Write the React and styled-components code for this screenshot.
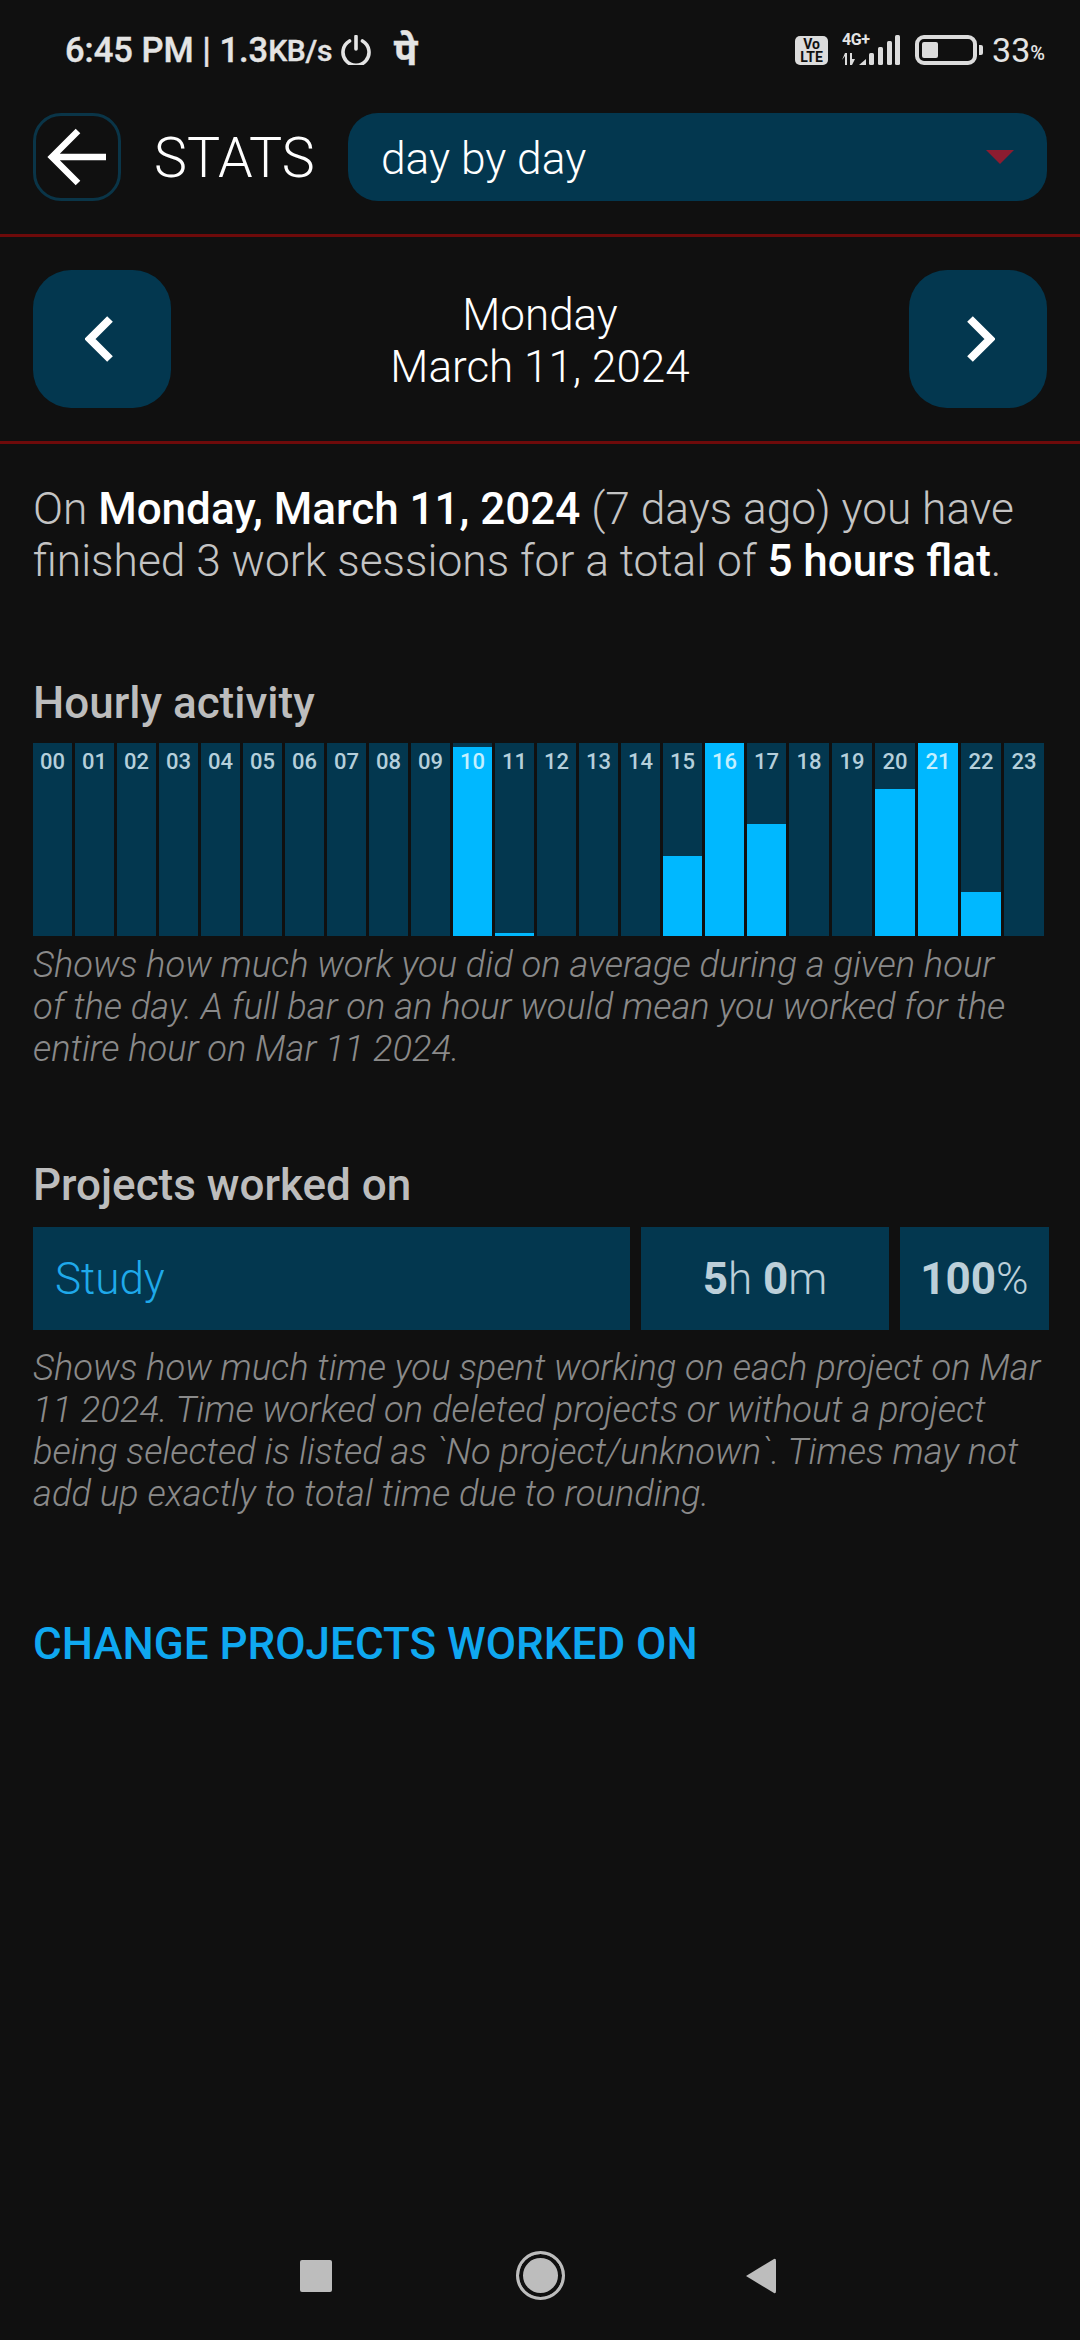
import styled, { createGlobalStyle } from "styled-components";

const GlobalStyle = createGlobalStyle`
  html, body {
    margin: 0;
    padding: 0;
    background: #101010;
  }
  * {
    box-sizing: border-box;
  }
`;

const Page = styled.div`
  width: 1080px;
  height: 2340px;
  display: flex;
  flex-direction: column;
  background: #101010;
  color: #fff;
  font-family: Roboto, "Noto Sans", sans-serif;
  overflow: hidden;
`;

const StatusBar = styled.div`
  height: 100px;
  padding: 0 35px 0 65px;
  display: flex;
  align-items: center;
  justify-content: space-between;
  color: #e4e4e4;
`;

const StatusLeft = styled.div`
  display: flex;
  align-items: center;
  font-size: 34.5px;
  font-weight: 500;
  -webkit-text-stroke: 0.4px #e4e4e4;
  white-space: pre;

  small {
    font-size: 30px;
    letter-spacing: -0.3px;
  }
`;

const Devanagari = styled.span`
  margin-left: 23px;
  font-family: "Noto Sans", "DejaVu Sans", sans-serif;
  font-size: 38px;
  font-weight: 700;
`;

const StatusRight = styled.div`
  display: flex;
  align-items: center;
`;

const VoLte = styled.div`
  width: 33px;
  height: 29px;
  border-radius: 5px;
  background: #dcdcdc;
  color: #101010;
  font-size: 14px;
  font-weight: 700;
  line-height: 13px;
  text-align: center;
  padding-top: 2px;
`;

const Network = styled.div`
  margin-left: 14px;
  width: 58px;
  height: 32px;
  position: relative;
`;

const NetworkLabel = styled.span`
  position: absolute;
  left: 0;
  top: -2px;
  font-size: 16px;
  font-weight: 700;
  line-height: 16px;
  letter-spacing: -0.4px;
`;

const Battery = styled.div`
  margin-left: 15px;
  width: 62px;
  height: 30px;
  border: 4px solid #dcdcdc;
  border-radius: 9px;
  padding: 3px;
`;

const BatteryFill = styled.div`
  width: 16px;
  height: 100%;
  background: #dcdcdc;
  border-radius: 2px;
`;

const BatteryTip = styled.div`
  margin-left: 2px;
  width: 4px;
  height: 10px;
  background: #dcdcdc;
  border-radius: 0 2px 2px 0;
`;

const BatteryText = styled.div`
  margin-left: 9px;
  font-size: 34px;
  font-weight: 400;
  display: flex;
  align-items: flex-end;
  line-height: 34px;

  small {
    font-size: 20px;
    font-weight: 500;
    line-height: 28px;
  }
`;

const Header = styled.div`
  margin-top: 13px;
  padding: 0 33px 33px;
  display: flex;
  align-items: center;
  border-bottom: 3px solid #6e0a0a;
`;

const BackButton = styled.div`
  width: 88px;
  height: 88px;
  border: 3px solid #0a3548;
  border-radius: 28px;
  display: flex;
  align-items: center;
  justify-content: center;
`;

const Title = styled.div`
  margin-left: 33px;
  width: 194px;
  padding-top: 2px;
  font-size: 55.5px;
  font-weight: 300;
`;

const Dropdown = styled.div`
  flex: 1;
  height: 88px;
  padding: 3px 33px 0;
  border-radius: 30px;
  background: #03374f;
  display: flex;
  align-items: center;
  justify-content: space-between;
  font-size: 44.3px;
  font-weight: 300;
`;

const Caret = styled.div`
  width: 0;
  height: 0;
  margin-top: -3px;
  border-left: 14px solid transparent;
  border-right: 14px solid transparent;
  border-top: 14px solid #8c1c30;
`;

const DateRow = styled.div`
  padding: 33px 33px;
  display: flex;
  align-items: center;
  justify-content: space-between;
  border-bottom: 3px solid #6e0a0a;
`;

const NavButton = styled.div`
  width: 138px;
  height: 138px;
  border-radius: 38px;
  background: #03374f;
  display: flex;
  align-items: center;
  justify-content: center;
`;

const DateLabel = styled.div`
  padding-top: 3px;
  text-align: center;
  font-size: 44px;
  line-height: 52px;
  font-weight: 300;
`;

const Content = styled.div`
  padding: 39px 33px 0;
  display: flex;
  flex-direction: column;
`;

const Summary = styled.p`
  margin: 0;
  font-size: 44.3px;
  line-height: 52px;
  font-weight: 300;
  color: #c4c4c4;

  strong {
    font-size: 44px;
    font-weight: 500;
    color: #fff;
  }
`;

const Heading = styled.h2`
  margin: ${(p) => p.$top}px 0 0;
  font-size: 44px;
  line-height: 52px;
  font-weight: 500;
  color: #bdbdbd;
`;

const Chart = styled.div`
  margin-top: 14px;
  height: 193px;
  display: grid;
  grid-template-columns: repeat(18, 39px) repeat(6, 40px);
  gap: 3px;
`;

const HourBar = styled.div`
  position: relative;
  background: #03374f;
  text-align: center;
`;

const HourFill = styled.div`
  position: absolute;
  left: 0;
  right: 0;
  bottom: 0;
  background: #00b8ff;
`;

const HourLabel = styled.span`
  position: relative;
  display: block;
  padding-top: 4px;
  font-size: 22px;
  line-height: 30px;
  font-weight: 500;
  color: ${(p) => (p.$bright ? "#c4f0ff" : "#b5cfdb")};
`;

const Caption = styled.p`
  margin: ${(p) => p.$top}px 0 0;
  font-size: 36.3px;
  line-height: 42px;
  font-weight: 300;
  font-style: italic;
  color: #8a8a8a;
`;

const ProjectRow = styled.div`
  margin-top: 16px;
  margin-right: -2px;
  display: flex;
  gap: 11px;
  height: 103px;
`;

const Cell = styled.div`
  flex: ${(p) => (p.$width ? `0 0 ${p.$width}px` : "1")};
  padding: ${(p) => (p.$width ? "0" : "0 22px")};
  background: #03374f;
  display: flex;
  align-items: center;
  justify-content: ${(p) => (p.$width ? "center" : "flex-start")};
  font-size: 44px;
  font-weight: 300;
  color: ${(p) => (p.$width ? "#bccfd9" : "#1fa9ea")};

  b {
    font-weight: 700;
  }
`;

const ActionLink = styled.div`
  margin-top: 103px;
  font-size: 44px;
  line-height: 52px;
  font-weight: 500;
  color: #0fa8f0;
`;

const NavBar = styled.div`
  margin-top: auto;
  height: 89px;
  padding: 0 4px 40px 0;
  display: flex;
  align-items: center;
  justify-content: center;
  gap: 184px;
`;

const RecentIcon = styled.div`
  width: 32px;
  height: 32px;
  border-radius: 2px;
  background: #bdbdbd;
`;

const HomeIcon = styled.div`
  width: 49px;
  height: 49px;
  border-radius: 50%;
  background: #bdbdbd;
  border: 3px solid #bdbdbd;
  box-shadow: inset 0 0 0 4px #101010;
`;

const ArrowBack = () => (
  <svg width="62" height="60" viewBox="0 0 62 60">
    <path d="M32 4 L6 30 L32 56 M6 30 H60" fill="none" stroke="#fff" strokeWidth="6.5" />
  </svg>
);

const Chevron = ({ right }) => (
  <svg width="34" height="46" viewBox="0 0 34 46">
    <path
      d={right ? "M9 3 L29 23 L9 43" : "M25 3 L5 23 L25 43"}
      fill="none"
      stroke="#fff"
      strokeWidth="8"
    />
  </svg>
);

const PowerIcon = () => (
  <svg width="30" height="30" viewBox="0 0 30 30" style={{ marginLeft: 9 }}>
    <path
      d="M8.5 6 A13 13 0 1 0 21.5 6 M15 1.5 V14"
      fill="none"
      stroke="#e4e4e4"
      strokeWidth="3.6"
      strokeLinecap="round"
    />
  </svg>
);

const SignalIcon = () => (
  <svg width="58" height="32" viewBox="0 0 58 32">
    <path d="M0 26 L3 22 V31 H5 V19 H3 Z M8 19 V31 H10 L13 25 H10 V19 Z" fill="#dcdcdc" />
    <path d="M17 31 L24 25 V31Z" fill="#dcdcdc" />
    <rect x="27" y="19" width="5" height="12" rx="1.5" fill="#dcdcdc" />
    <rect x="36" y="13" width="5" height="18" rx="1.5" fill="#dcdcdc" />
    <rect x="45" y="7" width="5" height="24" rx="1.5" fill="#dcdcdc" />
    <rect x="53" y="1" width="5" height="30" rx="1.5" fill="#dcdcdc" />
  </svg>
);

const TriangleIcon = () => (
  <svg width="31" height="36" viewBox="0 0 31 36" style={{ marginLeft: -4 }}>
    <path d="M1 18 L29 1 Q31 0 31 3 V33 Q31 36 29 35 Z" fill="#bdbdbd" />
  </svg>
);

const hours = {
  10: 98,
  11: 1.6,
  15: 41.5,
  16: 100,
  17: 58,
  20: 76,
  21: 100,
  22: 23,
};

const App = () => {
  return (
    <Page>
      <GlobalStyle />
      <StatusBar>
        <StatusLeft>
          6:45 PM | 1.3<small>KB/s</small>
          <PowerIcon />
          <Devanagari>पे</Devanagari>
        </StatusLeft>
        <StatusRight>
          <VoLte>
            Vo
            <br />
            LTE
          </VoLte>
          <Network>
            <NetworkLabel>4G+</NetworkLabel>
            <SignalIcon />
          </Network>
          <Battery>
            <BatteryFill />
          </Battery>
          <BatteryTip />
          <BatteryText>
            33<small>%</small>
          </BatteryText>
        </StatusRight>
      </StatusBar>

      <Header>
        <BackButton>
          <ArrowBack />
        </BackButton>
        <Title>STATS</Title>
        <Dropdown>
          day by day
          <Caret />
        </Dropdown>
      </Header>

      <DateRow>
        <NavButton>
          <Chevron />
        </NavButton>
        <DateLabel>
          Monday
          <br />
          March 11, 2024
        </DateLabel>
        <NavButton>
          <Chevron right />
        </NavButton>
      </DateRow>

      <Content>
        <Summary>
          On <strong>Monday, March 11, 2024</strong> (7 days ago) you have
          <br />
          finished 3 work sessions for a total of <strong>5 hours flat</strong>.
        </Summary>

        <Heading $top={90}>Hourly activity</Heading>
        <Chart>
          {Array.from({ length: 24 }, (_, i) => (
            <HourBar key={i}>
              {hours[i] && <HourFill style={{ height: `${hours[i]}%` }} />}
              <HourLabel $bright={hours[i] >= 98}>
                {String(i).padStart(2, "0")}
              </HourLabel>
            </HourBar>
          ))}
        </Chart>
        <Caption $top={8}>
          Shows how much work you did on average during a given hour
          <br />
          of the day. A full bar on an hour would mean you worked for the
          <br />
          entire hour on Mar 11 2024.
        </Caption>

        <Heading $top={89}>Projects worked on</Heading>
        <ProjectRow>
          <Cell>Study</Cell>
          <Cell $width={248}>
            <span>
              <b>5</b>h <b>0</b>m
            </span>
          </Cell>
          <Cell $width={149}>
            <span>
              <b>100</b>%
            </span>
          </Cell>
        </ProjectRow>
        <Caption $top={17}>
          Shows how much time you spent working on each project on Mar
          <br />
          11 2024. Time worked on deleted projects or without a project
          <br />
          being selected is listed as `No project/unknown`. Times may not
          <br />
          add up exactly to total time due to rounding.
        </Caption>
        <ActionLink>CHANGE PROJECTS WORKED ON</ActionLink>
      </Content>

      <NavBar>
        <RecentIcon />
        <HomeIcon />
        <TriangleIcon />
      </NavBar>
    </Page>
  );
};

export default App;
